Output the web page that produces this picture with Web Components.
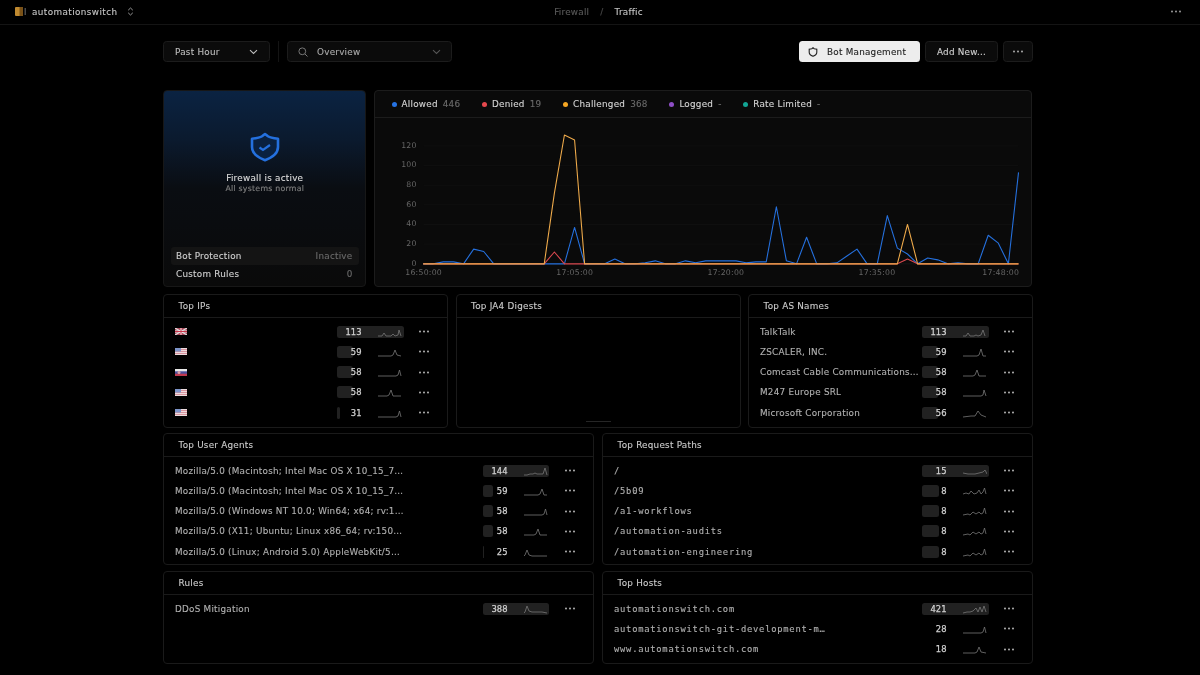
<!DOCTYPE html>
<html><head><meta charset="utf-8"><title>Firewall Traffic</title>
<style>
html,body{margin:0;background:#000;height:675px;overflow:hidden}
body{font-family:"DejaVu Sans","Liberation Sans",sans-serif;font-size:8.8px;color:#ccc;--mono:"DejaVu Sans Mono","Liberation Mono",monospace;filter:blur(.35px);-webkit-text-stroke:.12px}
main{display:flex;flex-direction:column;width:870px;margin-left:163px}
.r{display:grid;gap:7.5px}
.r1{grid-template-columns:203px 1fr;height:197px;margin-right:1px;margin-bottom:7px}
.r2{grid-template-columns:repeat(3,1fr);height:133.5px;margin-bottom:5.5px}
.r3{grid-template-columns:1fr 1fr;height:132px;margin-bottom:6px;gap:8px}
.r4{grid-template-columns:1fr 1fr;height:92.5px;gap:8px}
</style></head><body>
<top-bar></top-bar>
<main>
<tool-bar></tool-bar>
<div class="r r1"><fw-card></fw-card><traffic-chart></traffic-chart></div>
<div class="r r2">
<stat-card heading="Top IPs">
<stat-row flag="uk" value="113" bar="67" spark="0,9 4,9 6,6 8,9 11,9 13,9 15,7 17,9 20,8 21,3 23,9"></stat-row>
<stat-row flag="us" value="59" bar="16" spark="0,9 13,9 15,8 17,3 19,8 23,9"></stat-row>
<stat-row flag="sk" value="58" bar="16" spark="0,9 18,9 20,8 21.5,3 23,9"></stat-row>
<stat-row flag="us" value="58" bar="16" spark="0,9 9,9 11,8 13,3 15,9 23,9"></stat-row>
<stat-row flag="us" value="31" bar="3" spark="0,9 18,9 20,8 21.5,3 23,9"></stat-row>
</stat-card>
<stat-card heading="Top JA4 Digests" class="ja"><empty-mark></empty-mark></stat-card>
<stat-card heading="Top AS Names">
<stat-row label="TalkTalk" value="113" bar="67" spark="0,9 3,9 5,6 7,9 11,9 13,8 15,9 18,8 20,3 22,9"></stat-row>
<stat-row label="ZSCALER, INC." value="59" bar="16" spark="0,9 14,9 16,8 18,2 20,9 23,9"></stat-row>
<stat-row label="Comcast Cable Communications…" value="58" bar="16" spark="0,9 10,9 12,8 14,3 16,9 23,9"></stat-row>
<stat-row label="M247 Europe SRL" value="58" bar="16" spark="0,9 18,9 20,8 21,3 23,9"></stat-row>
<stat-row label="Microsoft Corporation" value="56" bar="16" spark="0,9 8,8 12,8 15,3 18,7 23,9"></stat-row>
</stat-card>
</div>
<div class="r r3">
<stat-card heading="Top User Agents">
<stat-row label="Mozilla/5.0 (Macintosh; Intel Mac OS X 10_15_7…" value="144" bar="66" spark="0,9 3,9 6,8 9,8 11,7 13,8 16,8 19,8 21,2 23,9"></stat-row>
<stat-row label="Mozilla/5.0 (Macintosh; Intel Mac OS X 10_15_7…" value="59" bar="10" spark="0,9 14,9 16,8 18,3 20,9 23,9"></stat-row>
<stat-row label="Mozilla/5.0 (Windows NT 10.0; Win64; x64; rv:1…" value="58" bar="10" spark="0,9 18,9 20,8 21.5,3 23,9"></stat-row>
<stat-row label="Mozilla/5.0 (X11; Ubuntu; Linux x86_64; rv:150…" value="58" bar="10" spark="0,9 10,9 12,8 14,3 16,9 23,9"></stat-row>
<stat-row label="Mozilla/5.0 (Linux; Android 5.0) AppleWebKit/5…" value="25" bar="1" spark="0,9 1,8 3,3 5,8 8,9 23,9"></stat-row>
</stat-card>
<stat-card heading="Top Request Paths">
<stat-row mono label="/" value="15" bar="67" spark="0,7 5,8 12,8 16,7 20,6 22,4 24,8"></stat-row>
<stat-row mono label="/5b09" value="8" bar="17" spark="0,8 3,7 6,8 8,5 11,8 14,7 16,4 18,8 20,6 21.5,2 23,8"></stat-row>
<stat-row mono label="/a1-workflows" value="8" bar="17" spark="0,9 5,8 7,9 10,6 13,8 16,6 18,8 20,7 21.5,2 23,8"></stat-row>
<stat-row mono label="/automation-audits" value="8" bar="17" spark="0,9 5,8 7,9 10,6 13,8 16,6 18,8 20,7 21.5,2 23,8"></stat-row>
<stat-row mono label="/automation-engineering" value="8" bar="17" spark="0,9 5,8 7,9 10,6 13,8 16,6 18,8 20,7 21.5,2 23,8"></stat-row>
</stat-card>
</div>
<div class="r r4">
<stat-card heading="Rules">
<stat-row label="DDoS Mitigation" value="388" bar="66" spark="0,9 1,8 3,2 5,7 8,8 14,8 18,8 23,9"></stat-row>
</stat-card>
<stat-card heading="Top Hosts">
<stat-row mono label="automationswitch.com" value="421" bar="67" spark="0,9 4,8 7,8 10,7 13,4 15,8 17,3 19,8 21,2 23,8"></stat-row>
<stat-row mono label="automationswitch-git-development-m…" value="28" spark="0,9 18,9 20,8 21.5,3 23,9"></stat-row>
<stat-row mono label="www.automationswitch.com" value="18" spark="0,9 12,9 14,8 16,3 18,8 23,9"></stat-row>
</stat-card>
</div>
</main>
<script>
const DOTS='<svg width="12" height="3" viewBox="0 0 12 3" fill="currentColor"><circle cx="2" cy="1.5" r=".9"/><circle cx="6" cy="1.5" r=".9"/><circle cx="10" cy="1.5" r=".9"/></svg>';
const CHEV='<svg width="9" height="6" viewBox="0 0 9 6" fill="none" stroke="currentColor" stroke-width="1.1"><path d="M1 1.2 4.5 4.4 8 1.2"/></svg>';
class Base extends HTMLElement{
  render(html){this.attachShadow({mode:'open'}).innerHTML=html}
}
customElements.define('top-bar',class extends Base{connectedCallback(){this.render(`<style>
:host{display:grid;grid-template-columns:1fr auto 1fr;align-items:center;box-sizing:border-box;height:25px;border-bottom:1px solid #141414;padding:0 18px 1px 15px;font-size:8.800px;letter-spacing:.25px}
.l{display:flex;align-items:center;color:#c4c4c4}.l b{font-weight:400;margin:0 10px 0 6px;letter-spacing:.42px}
.c{display:flex;gap:11px}.c i{font-style:normal;color:#4a4a4a}.c span{color:#5a5a5a}.c em{font-style:normal;color:#c4c4c4}
.d{justify-self:end;color:#aaa;display:flex}
</style>
<div class="l"><svg width="11" height="9" viewBox="0 0 11 9"><rect width="8" height="9" rx="1" fill="#c08a30"/><rect x="4.500" width="3.500" height="9" fill="#7a5218"/><rect x="9.500" y="1" width="1.500" height="7" fill="#4a4a4a"/></svg><b>automationswitch</b>
<svg width="7" height="9" viewBox="0 0 7 9" fill="none" stroke="#999" stroke-width="1"><path d="M1.200 3.200 3.500 1 5.800 3.200M1.200 5.800 3.500 8 5.800 5.800"/></svg></div>
<div class="c"><span>Firewall</span><i>/</i><em>Traffic</em></div>
<div class="d">${DOTS}</div>`)}});
customElements.define('tool-bar',class extends Base{connectedCallback(){this.render(`<style>
:host{display:flex;align-items:stretch;height:21px;margin:16px 0 28px;gap:5px;font-size:8.800px;letter-spacing:.25px;color:#bdbdbd}
.b{display:flex;align-items:center;box-sizing:border-box;background:#0b0b0b;border:1px solid #1c1c1c;border-radius:3.500px}
.p{width:107px;padding:0 11px;justify-content:space-between}
.sep{width:1px;background:#141414;margin:0 3px 0 3px}
.o{width:165px;padding:0 10px;gap:9px;color:#999}.o span{flex:1;color:#aaa}.o svg:last-child{color:#555}
.sp{flex:1}
.w{width:121px;background:#ededed;color:#222;border:0;gap:9px;padding-left:9px;box-sizing:border-box}
.a{width:73px;justify-content:center;color:#d0d0d0}
.m{width:30px;justify-content:center;color:#bbb}
</style>
<div class="b p"><span>Past Hour</span>${CHEV}</div><div class="sep"></div>
<div class="b o"><svg width="10" height="10" viewBox="0 0 10 10" fill="none" stroke="#777"><circle cx="4.300" cy="4.300" r="3.400"/><path d="M7 7 9.500 9.500"/></svg><span>Overview</span>${CHEV}</div>
<div class="sp"></div>
<div class="b w"><svg width="10" height="10" viewBox="0 0 10 10" fill="none" stroke="#222" stroke-width="1.100"><path d="M5 .8 6.200 1.700 8.800 2.200V5.200C8.800 7.300 7 8.500 5 9.300 3 8.500 1.200 7.300 1.200 5.200V2.200L3.800 1.700Z"/></svg><span>Bot Management</span></div>
<div class="b a">Add New...</div><div class="b m">${DOTS}</div>`)}});
customElements.define('fw-card',class extends Base{connectedCallback(){this.render(`<style>
:host{display:flex;flex-direction:column;box-sizing:border-box;border:1px solid #171717;border-radius:4px;background:linear-gradient(#0b2342 0,#0b1a2e 25%,#0a0d12 50%,#0a0a0a 100%);letter-spacing:.25px;padding:0 6.500px 3px 7px;font-size:8.800px}
.top{flex:1;display:flex;flex-direction:column;align-items:center;padding-top:41px}
svg{margin-bottom:11px}
.t{color:#dcdcdc;line-height:11px}.s{color:#808080;font-size:7.800px;line-height:10px}
.row{display:flex;justify-content:space-between;align-items:center;height:17.500px;padding:0 6px 0 5px;color:#cfcfcf;border-radius:3px}
.row.on{background:#141414}.row span{color:#6a6a6a}
.row+.row{margin-top:1px}
</style>
<div class="top"><svg width="32" height="30" viewBox="0 0 32 30"><path d="M16 2 19 4.300C21 5.700 25 6.300 29 6.800V15C29 22 22.500 25.800 16 28.200 9.500 25.800 3 22 3 15V6.800C7 6.300 11 5.700 13 4.300Z" fill="#0a2140" stroke="#2470de" stroke-width="2.600" stroke-linejoin="round"/><path d="M10.500 15.500 14 18 21 13" fill="none" stroke="#2470de" stroke-width="2.200"/></svg>
<div class="t">Firewall is active</div><div class="s">All systems normal</div></div>
<div class="row on">Bot Protection<span>Inactive</span></div>
<div class="row">Custom Rules<span>0</span></div>`)}});
customElements.define('traffic-chart',class extends Base{connectedCallback(){
const blue={2:2,3:2,5:15,6:12.500,15:37,19:5,22:1,23:3,26:3,27:1,28:3,29:3,30:3,31:3,32:1,33:2,34:2,35:58,36:3,38:27,41:1,42:8,43:15,46:49,47:16,48:10,50:6,51:4,53:1,56:29,57:21,59:93};
const or={13:72,14:131,15:126,48:40};const red={13:12,48:5};
const pts=o=>{let s=[];for(let i=0;i<60;i++){s.push((46.500+10.150*i).toFixed(1)+','+(146.700-(o[i]||0)*.989).toFixed(1))}return s.join(' ')};
const grid=[0,20,40,60,80,100,120];
const gl=grid.map(v=>`<line x1="47" x2="645" y1="${146.700-v*.989}" y2="${146.700-v*.989}" stroke="${v?'#0f0f0f':'#161616'}"/><text x="40" y="${148.500-v*.989}" text-anchor="end">${v}</text>`).join('');
const xl=[['16:50:00',47],['17:05:00',199],['17:20:00',351],['17:35:00',503]].map(a=>`<text x="${a[1]}" y="158" text-anchor="middle">${a[0]}</text>`).join('');
const items=[['#2673e3','Allowed','446'],['#e5484d','Denied','19'],['#f5a623','Challenged','368'],['#8e4ec6','Logged','-'],['#12a594','Rate Limited','-']];
this.render(`<style>
:host{display:flex;flex-direction:column;box-sizing:border-box;border:1px solid #1c1c1c;border-radius:4px;background:#0a0a0a;font-size:8.800px;letter-spacing:.25px;overflow:hidden}
.lg{display:flex;align-items:center;gap:21.700px;height:26px;border-bottom:1px solid #1c1c1c;padding-left:17px;flex:none;color:#d4d4d4}
.i{display:flex;align-items:center;gap:5px}.i u{width:5px;height:5px;border-radius:50%;text-decoration:none}.i span{color:#6a6a6a}.i b{font-weight:400}
svg{display:block;flex:1}text{fill:#666;font-size:7.800px;font-family:"DejaVu Sans",sans-serif;letter-spacing:.25px}
</style><div class="lg">${items.map(i=>`<div class="i"><u style="background:${i[0]}"></u><b>${i[1]}</b><span>${i[2]}</span></div>`).join('')}</div>
<svg viewBox="0 0 657 169" width="657" height="169">${gl}${xl}<text x="646" y="158" text-anchor="end">17:48:00</text>
<g fill="none" stroke-width="1.100" stroke-linejoin="round"><polyline points="${pts(blue)}" stroke="#2570dd"/><polyline points="${pts(red)}" stroke="#d9484f"/><polyline points="${pts(or)}" stroke="#eda94a"/></g></svg>`)}});
customElements.define('stat-card',class extends Base{connectedCallback(){this.render(`<style>
:host{display:flex;flex-direction:column;box-sizing:border-box;border:1px solid #1a1a1a;border-radius:4px;background:#000;min-width:0}
h3{margin:0;font-weight:400;font-size:8.800px;letter-spacing:.25px;color:#cacaca;height:22px;line-height:22px;padding-left:14.500px;border-bottom:1px solid #1a1a1a;flex:none}
.b{padding:3.500px 0 0;flex:1;display:flex;flex-direction:column;min-height:0}
</style><h3>${this.getAttribute('heading')}</h3><div class="b"><slot></slot></div>`)}});
customElements.define('empty-mark',class extends Base{connectedCallback(){this.render(`<style>
:host{display:block;margin:auto auto 5px;width:25px;height:1px;background:#262626}</style>`)}});
const FLAGS={
uk:'<rect width="12" height="7" fill="#a8485a"/><path d="M0 0 12 7M12 0 0 7" stroke="#ddd" stroke-width="1.200"/><path d="M6 0V7M0 3.500H12" stroke="#eee" stroke-width="2"/><path d="M6 0V7M0 3.500H12" stroke="#c8354a" stroke-width="1"/>',
us:'<rect width="12" height="7" fill="#ecdadc"/><path d="M0 1.500H12M0 3.500H12M0 5.500H12" stroke="#d8949e"/><rect width="6" height="3.500" fill="#7d94c8"/>',
sk:'<rect width="12" height="7" fill="#4a4f9c"/><rect width="12" height="2.300" fill="#e8e8e8"/><rect y="4.700" width="12" height="2.300" fill="#c03a50"/><circle cx="4" cy="3.500" r="1.500" fill="#d8a0a8"/>'};
customElements.define('stat-row',class extends Base{connectedCallback(){
const a=n=>this.getAttribute(n),bar=a('bar');
this.render(`<style>
:host{display:flex;align-items:center;height:20.250px;padding:0 17px 0 11px;font-size:8.800px;letter-spacing:.25px;color:#b0b0b0}
.l{flex:1;min-width:0;white-space:nowrap;overflow:hidden}
.mono{font-family:var(--mono);font-size:8.800px;letter-spacing:.75px}
.f{display:block}
.m{position:relative;display:flex;align-items:center;width:67px;height:12px;margin-right:14px;flex:none}
.bar{position:absolute;left:0;top:0;bottom:0;background:#212121;border-radius:2.500px}
.n{position:relative;width:24.500px;text-align:right;color:#d2d2d2;font-size:8.400px;letter-spacing:0;-webkit-text-stroke:.25px}
.s{position:relative;margin-left:16px;-webkit-text-stroke:0}
.d{color:#c5c5c5;display:flex}
</style>
<div class="l ${a('mono')!==null?'mono':''}">${a('flag')?`<svg class="f" width="12" height="7" viewBox="0 0 12 7">${FLAGS[a('flag')]}</svg>`:(a('label')||'')}</div>
<div class="m">${bar?`<div class="bar" style="width:${bar}px"></div>`:''}<div class="n">${a('value')}</div>
<svg class="s" width="24" height="10" viewBox="0 0 24 10" fill="none" stroke="#777" stroke-width=".8"><polyline points="${a('spark')}"/></svg></div>
<div class="d">${DOTS}</div>`)}});
</script>
</body></html>
